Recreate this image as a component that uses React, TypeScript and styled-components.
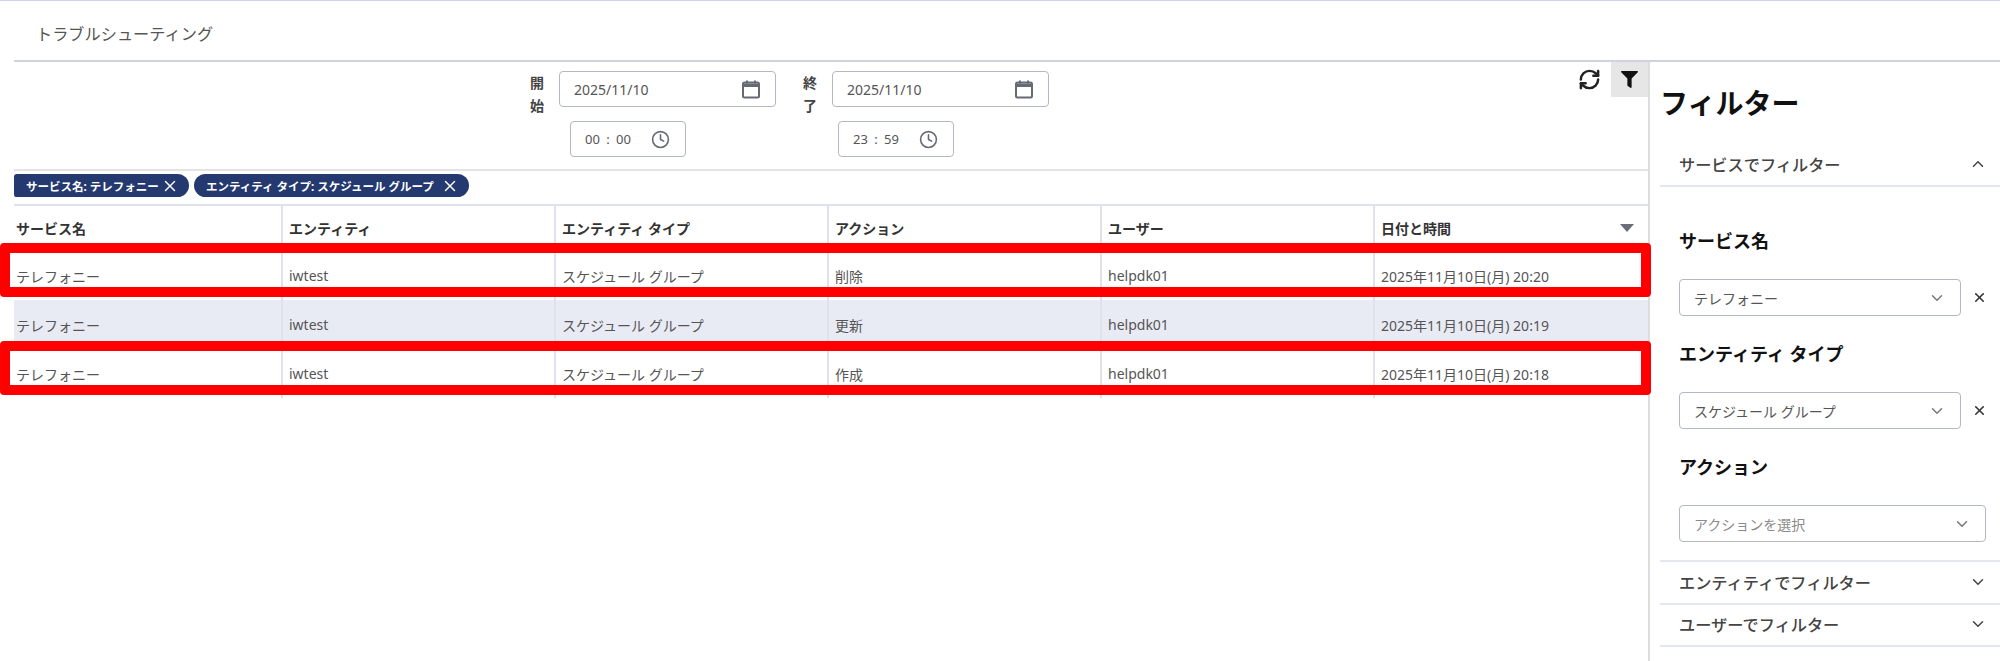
import React from 'react';
import styled, { createGlobalStyle } from 'styled-components';
import { ChevronDown, ChevronUp, Clock, RefreshCw, X } from 'lucide-react';
import { FaFilter } from 'react-icons/fa';

const GlobalStyle = createGlobalStyle`
  html, body { margin: 0; padding: 0; background: #fff; }
  body { font-family: "Noto Sans", "Noto Sans CJK JP", sans-serif; color: #333; }
  * { box-sizing: border-box; }
`;

const Page = styled.div`
  position: relative;
  width: 2000px;
  height: 661px;
  overflow: hidden;
  border-top: 1px solid #c9d3ee;
`;

const TopBar = styled.div`
  margin-left: 14px;
  height: 61px;
  padding: 4px 0 0 22px;
  display: flex;
  align-items: center;
  border-bottom: 2px solid #cfd2e0;
  font-size: 16.2px;
  color: #555;
`;

const Body = styled.div`
  display: flex;
  height: 599px;
`;

const Main = styled.div`
  width: 1636px;
  margin-left: 14px;
  flex: none;
  border-right: 2px solid #dcdcdc;
  display: flex;
  flex-direction: column;
`;

const FilterBar = styled.div`
  height: 109px;
  padding: 9px 0 0 514px;
  display: flex;
  border-bottom: 2px solid #e4e4e4;
  position: relative;
`;

const RangeField = styled.div`
  width: 273px;
  display: flex;
  align-items: flex-start;
`;

const RangeLabel = styled.div`
  width: 31px;
  flex: none;
  padding: 0 15px 0 2px;
  font-size: 14px;
  font-weight: 700;
  line-height: 23px;
  color: #444;
`;

const RangeInputs = styled.div`
  display: flex;
  flex-direction: column;
  gap: 14px;
`;

const DateInput = styled.div`
  width: 217px;
  height: 36px;
  padding: 0 14px;
  display: flex;
  align-items: center;
  justify-content: space-between;
  border: 1.5px solid #b4b7c6;
  border-radius: 4px;
  font-size: 14px;
  color: #555;
`;

const TimeInput = styled.div<{ $offset: number }>`
  width: 116px;
  height: 36px;
  margin-left: ${({ $offset }) => $offset}px;
  padding: 0 15px 0 14px;
  display: flex;
  align-items: center;
  justify-content: space-between;
  border: 1.5px solid #b4b7c6;
  border-radius: 4px;
  font-size: 13px;
  word-spacing: 3px;
  color: #555;
`;

const Tools = styled.div`
  position: absolute;
  top: 0;
  right: 0;
  display: flex;
  align-items: flex-start;
  gap: 10px;
`;

const ToolRefresh = styled.div`
  padding-top: 6px;
  color: #222;
  display: flex;
`;

const ToolFilter = styled.div`
  width: 37px;
  height: 35px;
  padding-top: 9px;
  background: #e6e6e6;
  display: flex;
  justify-content: center;
  align-items: flex-start;
  color: #111;
`;

const ChipRow = styled.div`
  height: 35px;
  padding-top: 3px;
  display: flex;
  gap: 5px;
  border-bottom: 2px solid #dfe2ee;
`;

const Chip = styled.div<{ $width: number }>`
  width: ${({ $width }) => $width}px;
  height: 23px;
  padding: 0 10px 0 12px;
  display: flex;
  align-items: center;
  justify-content: space-between;
  background: #23396f;
  border-radius: 12px;
  color: #fff;
  font-size: 11.5px;
  font-weight: 700;
  white-space: nowrap;
`;

const FirstChip = styled(Chip)`
  border-radius: 3px 12px 12px 3px;
`;

const Row = styled.div<{ $shaded?: boolean; $head?: boolean }>`
  display: grid;
  grid-template-columns: 269px 273px 273px 273px 273px 1fr;
  height: ${({ $head }) => ($head ? 45 : 49)}px;
  background: ${({ $shaded }) => ($shaded ? '#e9ebf4' : '#fff')};
`;

const Cell = styled.div`
  position: relative;
  display: flex;
  align-items: center;
  justify-content: space-between;
  padding: 0 14px 0 6px;
  font-size: 14px;
  color: #555;
  white-space: nowrap;
  border-right: 2px solid #dfe2ee;

  &:first-child {
    padding-left: 2px;
  }
  &:last-child {
    border-right: 0;
  }
`;

const HeadCell = styled(Cell)`
  padding-bottom: 2px;
  font-weight: 700;
  font-size: 14px;
  color: #333;
`;

const SortMark = styled.span`
  width: 0;
  height: 0;
  border-left: 7px solid transparent;
  border-right: 7px solid transparent;
  border-top: 8px solid #6b6d78;
`;

const Sidebar = styled.aside`
  flex: 1;
  padding: 24px 0 0 10px;
`;

const SidebarTitle = styled.h2`
  margin: 0 0 24px;
  font-size: 28px;
  line-height: 34px;
  font-weight: 700;
  color: #111;
`;

const AccordionHead = styled.div<{ $height: number }>`
  height: ${({ $height }) => $height}px;
  padding: 0 14px 2px 19px;
  display: flex;
  align-items: center;
  justify-content: space-between;
  border-bottom: 2px solid #e4e7f2;
  font-size: 16.2px;
  font-weight: 500;
  color: #444;
`;

const AccordionBody = styled.div`
  padding: 41px 14px 18px 19px;
  border-bottom: 2px solid #e4e7f2;
`;

const FieldTitle = styled.h3`
  margin: 0 0 25px;
  font-size: 18px;
  line-height: 26px;
  font-weight: 700;
  color: #111;
`;

const SelectRow = styled.div`
  display: flex;
  align-items: center;
  margin-bottom: 25px;

  &:last-child {
    margin-bottom: 0;
  }
`;

const Select = styled.div<{ $wide?: boolean }>`
  width: ${({ $wide }) => ($wide ? 307 : 282)}px;
  height: 37px;
  padding: 0 14px;
  display: flex;
  align-items: center;
  justify-content: space-between;
  border: 1.5px solid #b4b7c6;
  border-radius: 4px;
  font-size: 14px;
  color: #555;
  flex: none;
`;

const Placeholder = styled.span`
  color: #8a8a8a;
`;

const ClearIcon = styled.span`
  margin-left: 11px;
  display: flex;
  color: #333;
`;

const Highlight = styled.div<{ $top: number }>`
  position: absolute;
  left: 0;
  top: ${({ $top }) => $top}px;
  width: 1651px;
  height: 54px;
  border: 10px solid #ff0000;
  border-radius: 4px;
  pointer-events: none;
`;

const CalendarIcon = () => (
  <svg width="20" height="20" viewBox="0 0 20 20" fill="none">
    <path d="M6 1.5v3M14 1.5v3" stroke="#666a75" strokeWidth="2" />
    <rect x="2" y="3.5" width="16" height="15" rx="1.5" stroke="#666a75" strokeWidth="2" />
    <path d="M2 4.5h16v3.5H2z" fill="#666a75" />
  </svg>
);

const rows = [
  { action: '削除', time: '20:20' },
  { action: '更新', time: '20:19', shaded: true },
  { action: '作成', time: '20:18' },
];

export default function App() {
  return (
    <Page>
      <GlobalStyle />
      <TopBar>トラブルシューティング</TopBar>
      <Body>
        <Main>
          <FilterBar>
            <RangeField>
              <RangeLabel>開始</RangeLabel>
              <RangeInputs>
                <DateInput>
                  2025/11/10
                  <CalendarIcon />
                </DateInput>
                <TimeInput $offset={11}>
                  <span>00 : 00</span>
                  <Clock size={19} color="#666a75" />
                </TimeInput>
              </RangeInputs>
            </RangeField>
            <RangeField>
              <RangeLabel>終了</RangeLabel>
              <RangeInputs>
                <DateInput>
                  2025/11/10
                  <CalendarIcon />
                </DateInput>
                <TimeInput $offset={6}>
                  <span>23 : 59</span>
                  <Clock size={19} color="#666a75" />
                </TimeInput>
              </RangeInputs>
            </RangeField>
            <Tools>
              <ToolRefresh>
                <RefreshCw size={23} strokeWidth={2.6} />
              </ToolRefresh>
              <ToolFilter>
                <FaFilter size={17} />
              </ToolFilter>
            </Tools>
          </FilterBar>
          <ChipRow>
            <FirstChip $width={175}>
              サービス名: テレフォニー
              <X size={18} />
            </FirstChip>
            <Chip $width={275}>
              エンティティ タイプ: スケジュール グループ
              <X size={18} />
            </Chip>
          </ChipRow>
          <Row $head>
            <HeadCell>サービス名</HeadCell>
            <HeadCell>エンティティ</HeadCell>
            <HeadCell>エンティティ タイプ</HeadCell>
            <HeadCell>アクション</HeadCell>
            <HeadCell>ユーザー</HeadCell>
            <HeadCell>
              日付と時間
              <SortMark />
            </HeadCell>
          </Row>
          {rows.map((row) => (
            <Row key={row.time} $shaded={row.shaded}>
              <Cell>テレフォニー</Cell>
              <Cell>iwtest</Cell>
              <Cell>スケジュール グループ</Cell>
              <Cell>{row.action}</Cell>
              <Cell>helpdk01</Cell>
              <Cell>2025年11月10日(月) {row.time}</Cell>
            </Row>
          ))}
        </Main>
        <Sidebar>
          <SidebarTitle>フィルター</SidebarTitle>
          <AccordionHead $height={43}>
            サービスでフィルター
            <ChevronUp size={18} />
          </AccordionHead>
          <AccordionBody>
            <FieldTitle>サービス名</FieldTitle>
            <SelectRow>
              <Select>
                テレフォニー
                <ChevronDown size={18} color="#777" />
              </Select>
              <ClearIcon>
                <X size={15} strokeWidth={2.5} />
              </ClearIcon>
            </SelectRow>
            <FieldTitle>エンティティ タイプ</FieldTitle>
            <SelectRow>
              <Select>
                スケジュール グループ
                <ChevronDown size={18} color="#777" />
              </Select>
              <ClearIcon>
                <X size={15} strokeWidth={2.5} />
              </ClearIcon>
            </SelectRow>
            <FieldTitle>アクション</FieldTitle>
            <SelectRow>
              <Select $wide>
                <Placeholder>アクションを選択</Placeholder>
                <ChevronDown size={18} color="#777" />
              </Select>
            </SelectRow>
          </AccordionBody>
          <AccordionHead $height={43}>
            エンティティでフィルター
            <ChevronDown size={18} />
          </AccordionHead>
          <AccordionHead $height={42}>
            ユーザーでフィルター
            <ChevronDown size={18} />
          </AccordionHead>
        </Sidebar>
      </Body>
      <Highlight $top={242} />
      <Highlight $top={340} />
    </Page>
  );
}
